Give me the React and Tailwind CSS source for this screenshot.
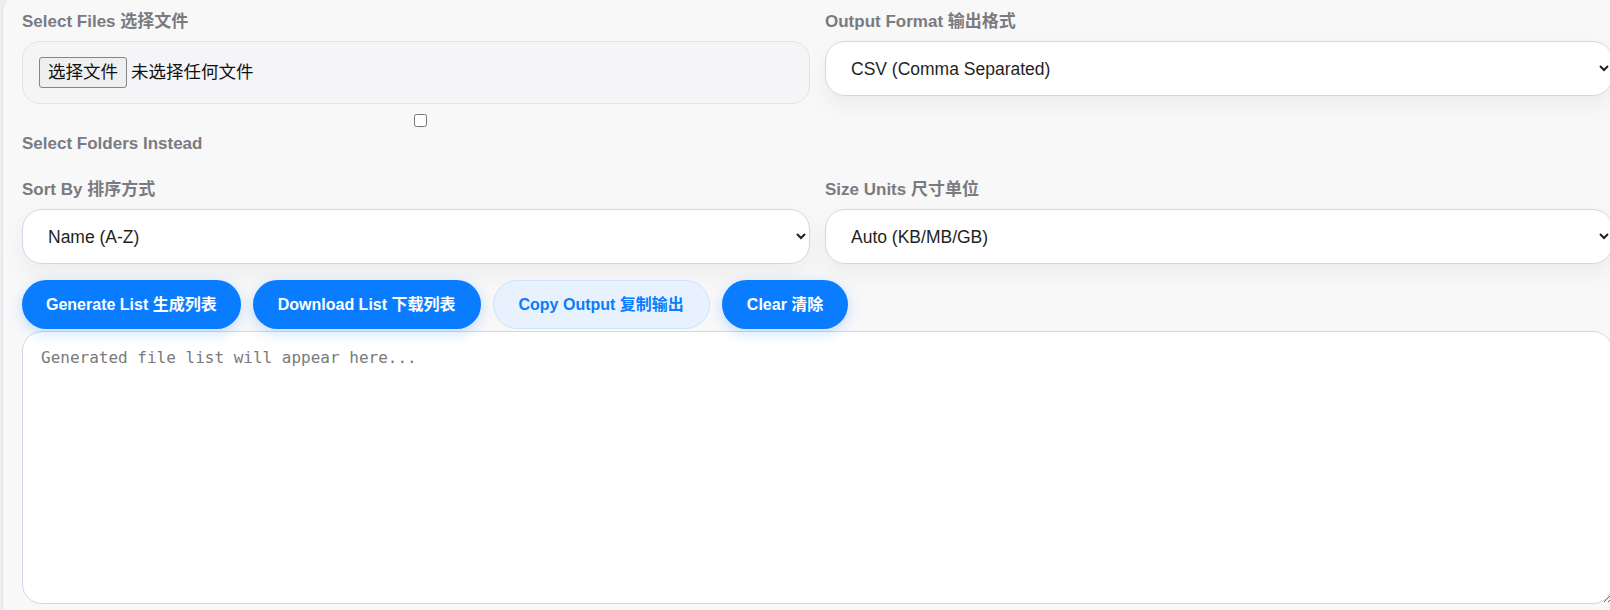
import React, { useState } from 'react';

const labelCls = "block text-[17px] leading-[19px] font-bold text-[#7a7b80] mb-[10px]";
const selectCls = "block w-full h-[55px] rounded-[20px] border border-[#cfd8e9] bg-white pl-[21px] pr-[8px] text-[17.5px] text-[#1f1f1f] shadow-[0_10px_24px_rgba(0,0,0,0.05)] outline-none";

const App = () => {
  const [folders, setFolders] = useState(false);
  const [format, setFormat] = useState('csv');
  const [sortBy, setSortBy] = useState('name');
  const [units, setUnits] = useState('auto');
  const [output, setOutput] = useState('');

  return (
    <div className="h-[610px] w-full overflow-hidden bg-[#eeeef0] font-['Liberation_Sans','Noto_Sans_CJK_SC',sans-serif]">
      <div className="ml-[2px] mt-[-8px] w-[1631px] rounded-[20px] border border-[#e3e3e7] bg-[#f8f8f9] px-[19px] pt-[19px] pb-6">
        <div className="grid grid-cols-2 gap-x-[15px] gap-y-[27px]">
          {/* files */}
          <div>
            <label className={labelCls}>Select Files 选择文件</label>
            <div className="flex h-[63px] items-center rounded-[18px] border border-[#e4e4e8] bg-[#f5f5f7] px-4">
              <label className="flex items-center text-[17.5px] text-[#111]">
                <input type="file" multiple className="hidden" />
                <span className="flex h-[31px] items-center rounded-[3px] border border-[#858585] bg-[#efefef] px-[8px]">选择文件</span>
                <span className="ml-[4px]">未选择任何文件</span>
              </label>
            </div>
            <div className="mt-[10px] flex justify-center pl-[8px]">
              <input
                type="checkbox"
                checked={folders}
                onChange={e => setFolders(e.target.checked)}
                className="m-0 h-[13px] w-[13px]"
              />
            </div>
            <label className="mt-[7px] block text-[17px] leading-[19px] font-bold text-[#7a7b80]">Select Folders Instead</label>
          </div>

          {/* format */}
          <div>
            <label className={labelCls}>Output Format 输出格式</label>
            <select value={format} onChange={e => setFormat(e.target.value)} className={selectCls}>
              <option value="csv">CSV (Comma Separated)</option>
              <option value="txt">Plain Text</option>
              <option value="json">JSON</option>
            </select>
          </div>

          {/* sort */}
          <div>
            <label className={labelCls}>Sort By 排序方式</label>
            <select value={sortBy} onChange={e => setSortBy(e.target.value)} className={selectCls}>
              <option value="name">Name (A-Z)</option>
              <option value="size">Size</option>
              <option value="date">Date</option>
            </select>
          </div>

          {/* units */}
          <div>
            <label className={labelCls}>Size Units 尺寸单位</label>
            <select value={units} onChange={e => setUnits(e.target.value)} className={selectCls}>
              <option value="auto">Auto (KB/MB/GB)</option>
              <option value="kb">KB</option>
              <option value="mb">MB</option>
            </select>
          </div>
        </div>

        <div className="mt-4 flex gap-3">
          <button className="h-[49px] rounded-full bg-[#0a7cff] px-6 text-[16px] font-bold text-white shadow-[0_4px_14px_rgba(10,124,255,0.22)]">
            Generate List 生成列表
          </button>
          <button className="h-[49px] rounded-full bg-[#0a7cff] px-[25px] text-[16px] font-bold text-white shadow-[0_4px_14px_rgba(10,124,255,0.22)]">
            Download List 下载列表
          </button>
          <button
            onClick={() => navigator.clipboard && navigator.clipboard.writeText(output)}
            className="h-[49px] rounded-full border border-[#cfe2fb] bg-[#e8f2fe] px-[25px] text-[16px] font-bold text-[#0a7cff]"
          >
            Copy Output 复制输出
          </button>
          <button
            onClick={() => setOutput('')}
            className="h-[49px] rounded-full bg-[#0a7cff] px-[25px] text-[16px] font-bold text-white shadow-[0_4px_14px_rgba(10,124,255,0.22)]"
          >
            Clear 清除
          </button>
        </div>

        <textarea
          value={output}
          onChange={e => setOutput(e.target.value)}
          placeholder="Generated file list will appear here..."
          className="mt-[2px] block h-[273px] w-full rounded-[20px] border border-[#cfd8e9] bg-white px-[18px] py-4 font-['DejaVu_Sans_Mono',monospace] text-[16px] leading-[19px] text-[#222] placeholder:text-[#7a7a7a] outline-none"
        />
      </div>
    </div>
  );
};

export default App;
